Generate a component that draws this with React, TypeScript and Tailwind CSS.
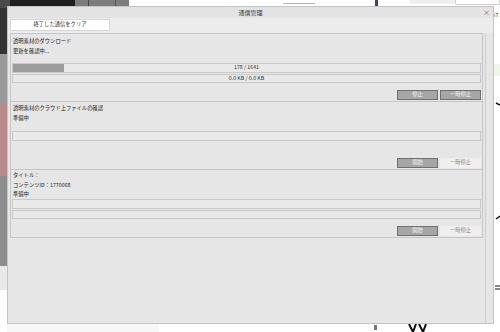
import React from "react";

const FONT = "font-['Noto_Sans_CJK_JP','Noto_Sans',sans-serif]";

type BtnProps = { label: string; enabled?: boolean };

function ActionButton({ label, enabled = true }: BtnProps) {
  return enabled ? (
    <div className="flex h-[10px] w-[41px] items-center justify-center border border-[#6f6f6f] bg-[#a6a6a6] text-[#f4f4f4]">
      {label}
    </div>
  ) : (
    <div className="flex h-[10px] w-[41px] items-center justify-center bg-[#efefef] text-[#8a8a8a]">
      {label}
    </div>
  );
}

function Bar({ text, fill, tall = true }: { text?: string; fill?: number; tall?: boolean }) {
  return (
    <div
      className={`relative mx-[1px] flex items-center justify-center border border-[#c9c9c9] bg-[#e9e9e9] ${
        tall ? "h-[10px]" : "h-[9px]"
      }`}
    >
      {fill !== undefined && (
        <div className="absolute inset-y-0 left-0 bg-[#9d9d9d]" style={{ width: `${fill}%` }} />
      )}
      {text && <span className="relative text-[#333]">{text}</span>}
    </div>
  );
}

type Job = {
  lines: string[];
  bars: { text?: string; fill?: number }[];
  primary: string;
  pauseEnabled: boolean;
  padTop: string;
};

const JOBS: Job[] = [
  {
    lines: ["透明素材のダウンロード", "更新を確認中..."],
    bars: [{ text: "178 / 1641", fill: (178 / 1641) * 100 }, { text: "0.0 KB / 0.0 KB" }],
    primary: "停止",
    pauseEnabled: true,
    padTop: "pt-[3px]",
  },
  {
    lines: ["透明素材のクラウド上ファイルの確認", "準備中"],
    bars: [{}],
    primary: "開始",
    pauseEnabled: false,
    padTop: "pt-[2px]",
  },
  {
    lines: ["タイトル：", "コンテンツID：1770068", "準備中"],
    bars: [{}, {}],
    primary: "開始",
    pauseEnabled: false,
    padTop: "pt-[1px]",
  },
];

function JobPanel({ job }: { job: Job }) {
  return (
    <div className="-mt-[1px] ml-[2px] flex h-[69px] w-[473px] flex-col border border-[#c6c6c6] bg-[#e6e6e6] first:mt-0">
      <div className={`h-[29px] px-[2px] leading-[9.5px] text-[#222] ${job.padTop}`}>
        {job.lines.map((l) => (
          <div key={l} className="whitespace-nowrap">
            {l}
          </div>
        ))}
      </div>
      <div className="flex flex-col gap-[1px]">
        {job.bars.map((b, i) => (
          <Bar key={i} text={b.text} fill={b.fill} tall={i === 0} />
        ))}
      </div>
      <div className="mt-auto mb-[1px] mr-[1px] flex justify-end gap-[2px]">
        <ActionButton label={job.primary} />
        <ActionButton label="一時停止" enabled={job.pauseEnabled} />
      </div>
    </div>
  );
}

// what shows around the dialog: bits of the app window behind it
function Backdrop() {
  return (
    <div className="flex h-full w-full flex-col bg-white">
      <div className="flex h-[8px] shrink-0">
        <div className="w-[10px] bg-[#4a4a4a]" />
        <div className="w-[65px] bg-[#1f1f1f]" />
        <div className="flex w-[54px] justify-around bg-[#7c7c7c]">
          <div className="w-[1px] bg-[#444]" />
          <div className="w-[1px] bg-[#555]" />
        </div>
        <div className="w-[154px]" />
        <div className="mt-[3px] h-[1px] w-[32px] bg-[#8cc0e6]" />
        <div className="w-[60px]" />
        <div className="h-[7px] w-[3px] bg-[#3b4660]" />
        <div className="w-[32px]" />
        <div className="h-[4px] w-[45px] bg-[#efefef]" />
        <div className="h-[5px] flex-1 rounded-b-[2px] border border-t-0 border-[#cfcfcf]" />
      </div>
      <div className="flex min-h-0 flex-1 overflow-hidden">
        <div className="flex w-[8px] flex-col">
          <div className="h-[46px] bg-[#333]" />
          <div className="h-[50px] bg-[#9a9a9a]" />
          <div className="h-[72px] bg-[#b88a8c]" />
          <div className="h-[90px] bg-[#8d8d8d]" />
          <div className="h-[24px] bg-[#e9e9e9]" />
        </div>
        <div className="flex-1" />
        <div className="flex w-[6px] flex-col pt-[4px]">
          <div className={`text-[5px] leading-[6px] text-[#333] ${FONT}`}>iT</div>
          <div className="mt-[46px] h-[12px] bg-[#eef7ea]" />
          <svg width="6" height="220" viewBox="0 0 6 220" className="mt-[20px]">
            <path d="M2 7 L6 9" stroke="#111" strokeWidth="1.5" />
            <path d="M2 123 L6 120" stroke="#111" strokeWidth="1.5" />
            <path d="M1 190 H6 M1 193 H6" stroke="#111" strokeWidth="1" />
          </svg>
        </div>
      </div>
      <div className="flex h-[8px] shrink-0">
        <div className="w-[7px]" />
        <div className="w-[152px] bg-[#f7f7f7]" />
        <div className="w-[215px]" />
        <div className="mt-[1px] h-[5px] w-[3px] bg-[#777]" />
        <svg width="40" height="8" viewBox="0 0 40 8" className="ml-[30px]">
          <path d="M2 0 L6 8 L9 0 M12 0 L16 8 L19 0" stroke="#111" strokeWidth="2" fill="none" />
        </svg>
      </div>
    </div>
  );
}

export default function App() {
  return (
    <div className={`relative h-[332px] w-[500px] overflow-hidden ${FONT} text-[5.3px]`}>
      <Backdrop />
      <div className="absolute left-[7px] top-[6px] flex h-[318px] w-[487px] flex-col border border-[#c4c4c4] bg-[#e6e6e6]">
        <div className="relative flex h-[11px] items-center justify-center bg-[#e3e3e3] text-[6px] text-[#333]">
          通信管理
          <span className="absolute right-[3px] top-0 text-[7px] text-[#666]">×</span>
        </div>
        <div className="h-[15px] bg-[#ececec] pl-[2px] pt-[1px]">
          <div className="flex h-[12px] w-[100px] items-center justify-center border border-[#d6d6d6] bg-white text-[#333]">
            終了した通信をクリア
          </div>
        </div>
        <div className="flex min-h-0 flex-1">
          <div className="flex w-[478px] flex-col border-r border-[#cdcdcd]">
            {JOBS.map((job, i) => (
              <JobPanel key={i} job={job} />
            ))}
          </div>
        </div>
      </div>
    </div>
  );
}
